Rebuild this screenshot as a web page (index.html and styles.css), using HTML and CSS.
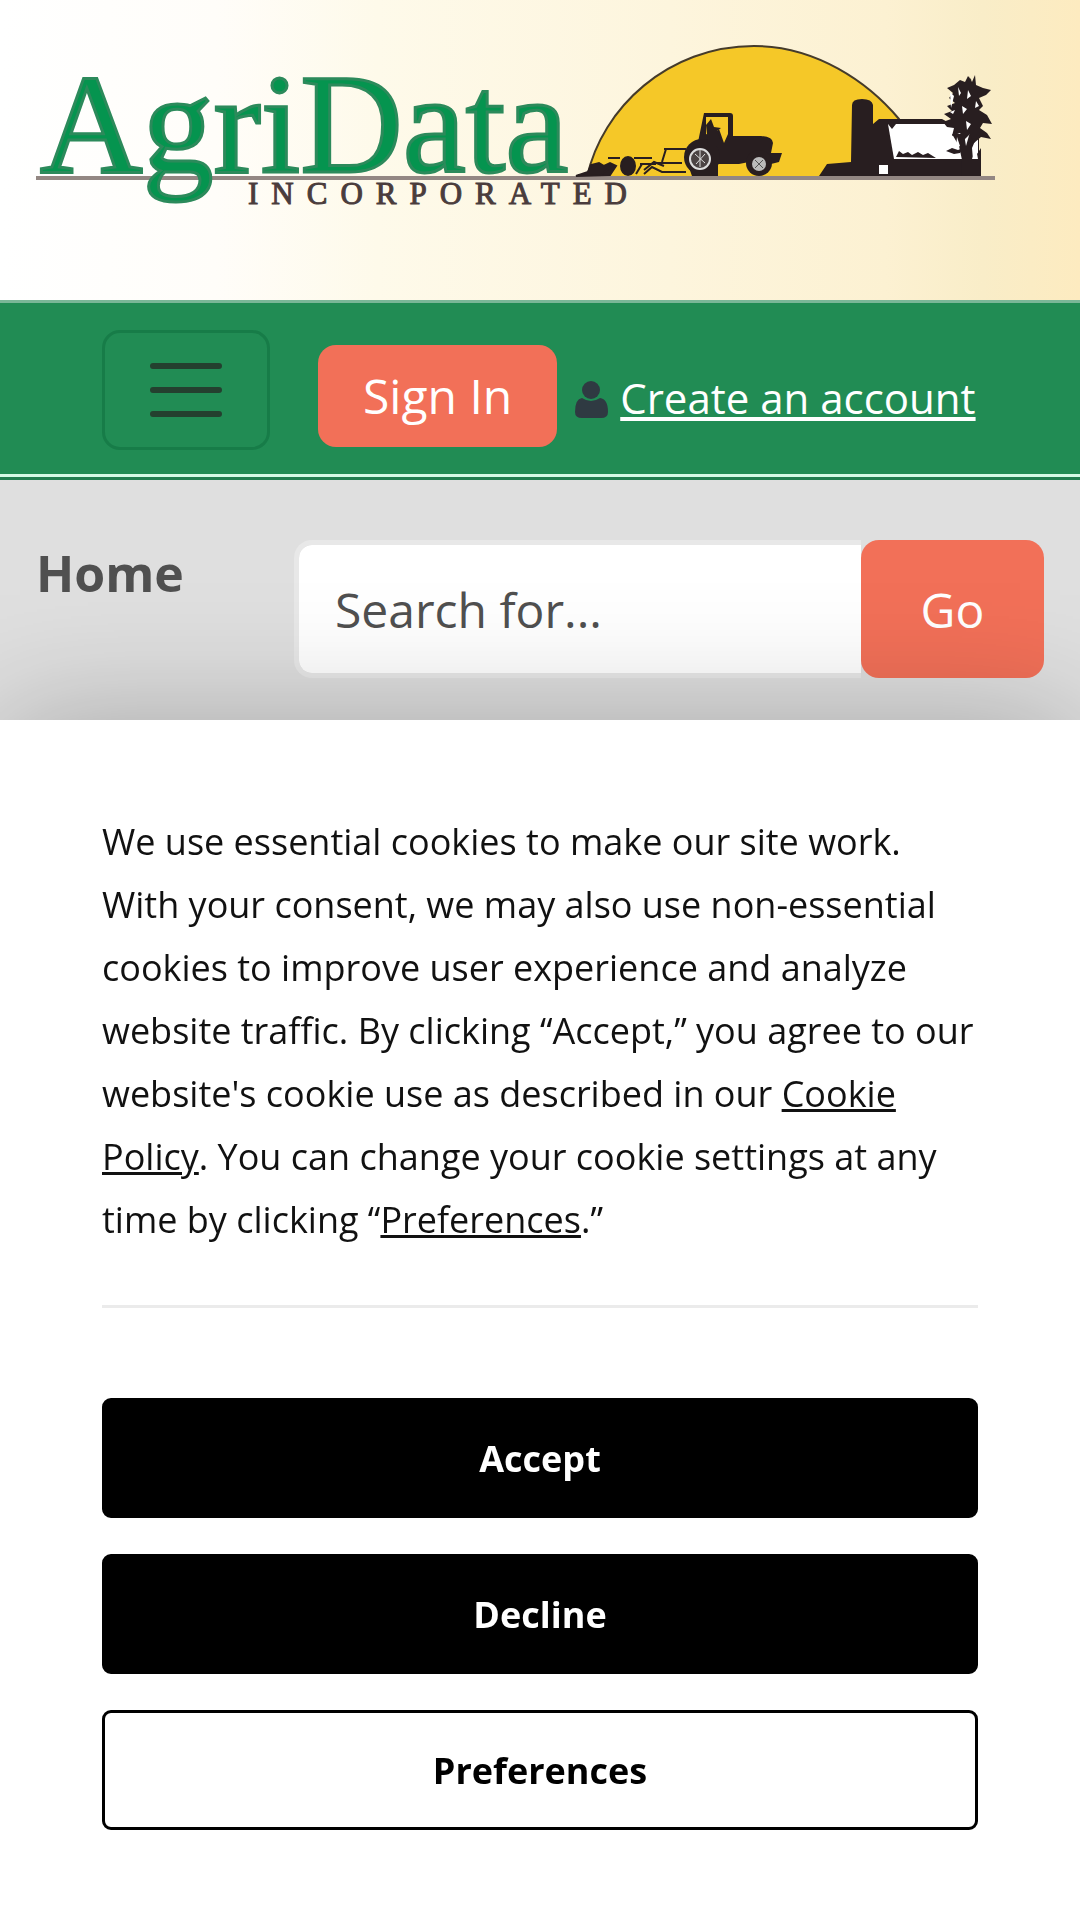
FILE: index.html
```html
<!DOCTYPE html>
<html lang="en">
<head>
    <meta charset="UTF-8">
    <meta name="viewport" content="width=device-width, initial-scale=1.0">
    <title>AgriData Incorporated</title>
    <link rel="stylesheet" href="styles.css">
</head>
<body>
    <header class="banner">
        <a href="#" aria-label="AgriData Incorporated">
            <svg class="logo" viewBox="36 40 960 170">
                <!-- sun -->
                <path d="M587 177C602 108 668 46 754 46C816 46 868 82 899 119L925 177Z" fill="#f5c828" stroke="#453b2b" stroke-width="2"/>
                <!-- ground line -->
                <path d="M36 178H995" stroke="#938783" stroke-width="4"/>
                <!-- plow -->
                <g fill="#281e20" stroke="#281e20" stroke-width="2">
                    <path d="M576 176l12-4 3-7 8-2 5 3 6-3 6 3-6 9z"/>
                    <ellipse cx="628" cy="166" rx="7" ry="9"/>
                    <path d="M608 158h12M634 158h18M640 164h16M644 170l10-8 10 4M644 174l8-7 10 5h24M664 149h22M666 149l-4 13M612 166l-10 8M636 174l6-10M652 163h30" fill="none"/>
                </g>
                <!-- tractor -->
                <g fill="#281e20">
                    <path d="M704 113h26q3 0 3 3v20h28q12 1 12 7l-2 10h11l-3 9-8 2-6-2h-16l-10 2h-22l-16-14-3-8z"/>
                    <circle cx="702" cy="157" r="18"/>
                    <path d="M688 165h30v11h-26z"/>
                    <circle cx="759" cy="163" r="13"/>
                    <path d="M706 117h22v17l-4 9-5-14-7 7-6-2z" fill="#f5c828"/>
                    <path d="M706 125l5-6 3 8 7 1-4 3 5 12h-14z"/>
                    <circle cx="700" cy="159" r="10" fill="#4b4343" stroke="#ddd" stroke-width="2"/>
                    <path d="M695 154l10 9M705 154l-9 10M700 150v17" stroke="#ddd" stroke-width="1"/>
                    <circle cx="759" cy="164" r="7" fill="#bbb"/>
                    <path d="M755 160l8 8M763 160l-8 8" stroke="#555" stroke-width="1"/>
                </g>
                <!-- silo and barn -->
                <g fill="#281e20">
                    <path d="M852 105q0-6 10-6t11 6v19l6-5h63l37 20v37H819l8-12 24-2z"/>
                    <path d="M888 124h58l32 12v23h-84z" fill="#fff"/>
                    <path d="M888 124h8l-4 5zM896 157l3-6 4 3 5-2 4 3 6-3 5 3 5-2 8 5zM946 151l6-3 6 2 5-2-3 5-6 1z"/>
                    <path d="M879 165h9v9h-9z" fill="#fff"/>
                </g>
                <!-- tree -->
                <g fill="#281e20">
                    <path d="M962 160l-3-14-7-12h12l2 12 4-14 8 2-6 14 1 12 8-12v28h-20z"/>
                    <path d="M969 76l3 6 3-7 1 10 7 3 8 2-5 5-7 3 4 8-4 4 8 5 5 9-9-1-3 5 7 5 4 6-10-2-7 6-4-9-6 6-4-7-8 3 2-8-7-1-4-5 8-3-7-5 8-3-5-5 8-3-6-5 4-5-6-5 7-3 6-5 5 2 3-6 4 5z"/>
                    <path d="M950 92l4 4-3 12zM958 87l3 6-2 3zM968 90l3 6-4 3zM962 106l5 3-4 5zM976 101l3 5-4 2zM966 121l5 3-4 6zM950 112l5-2-2 4zM957 137l3 9-4 2zM976 148l2 11-6 0z" fill="#fff"/>
                </g>
                <text class="logo-name" x="40" y="172">AgriData</text>
                <text class="logo-sub" x="248" y="204">INCORPORATED</text>
            </svg>
        </a>
    </header>

    <nav class="navbar">
        <button class="menu-toggle" type="button" aria-label="Toggle navigation">
            <svg viewBox="0 0 90 90" width="90" height="90">
                <path d="M12 21h66M12 45h66M12 69h66" stroke="#24402f" stroke-width="6" stroke-linecap="round"/>
            </svg>
        </button>
        <button class="sign-in" type="button">Sign In</button>
        <svg class="user-icon" viewBox="0 0 33 38" width="33" height="38">
            <circle cx="16" cy="10" r="9"/>
            <path d="M7 18q9 6 18 0q8 1 8 14q0 6-7 6H7q-7 0-7-6Q0 19 7 18z"/>
        </svg>
        <a class="create-account" href="#">Create an account</a>
    </nav>

    <main class="toolbar">
        <h1>Home</h1>
        <form class="search">
            <input type="text" placeholder="Search for..." aria-label="Search for">
            <button type="button">Go</button>
        </form>
    </main>

    <section class="cookie-notice" aria-label="Cookie notice">
        <p>We use essential cookies to make our site work. With your consent, we may also use non-essential cookies to improve user experience and analyze website traffic. By clicking “Accept,” you agree to our website's cookie use as described in our <a href="#">Cookie Policy</a>. You can change your cookie settings at any time by clicking “<a href="#">Preferences</a>.”</p>
        <div class="cookie-buttons">
            <button type="button">Accept</button>
            <button type="button">Decline</button>
            <button class="outline" type="button">Preferences</button>
        </div>
    </section>
</body>
</html>
```
FILE: styles.css
```css
* {
    margin: 0;
    padding: 0;
    box-sizing: border-box;
}

body {
    font-family: "Open Sans", sans-serif;
    font-size: 48px;
    background: #dfdfdf;
    min-height: 100vh;
}

button,
input {
    font-family: inherit;
    font-size: 48px;
}

button {
    cursor: pointer;
}

.banner {
    padding: 40px 36px 90px;
    background: linear-gradient(to right, #fff, #fffdf9 20%, #fefaea 35%, #fdf5dd 62%, #fcf1d2 82%, #f9edc8 91%, #fdebc0);
}

.banner a {
    display: block;
}

.logo {
    display: block;
    width: 100%;
    max-width: 960px;
}

.logo-name {
    font-family: "Liberation Serif", serif;
    font-size: 142px;
    fill: #05944f;
    stroke: #2c8a5b;
    stroke-width: 3px;
}

.logo-sub {
    font-family: "Liberation Serif", serif;
    font-size: 31px;
    letter-spacing: 13px;
    fill: #4a3c3c;
    stroke: #4a3c3c;
    stroke-width: 1px;
}

.navbar {
    display: flex;
    align-items: center;
    padding: 27px 102px;
    background: #218c54;
    border-top: 3px solid #7ab797;
    border-bottom: 3px solid #217e50;
    box-shadow: inset 0 -3px #d5fbe6;
}

.menu-toggle {
    display: flex;
    align-items: center;
    justify-content: center;
    width: 168px;
    height: 120px;
    margin-right: 48px;
    background: none;
    border: 3px solid #177c48;
    border-radius: 18px;
}

.sign-in {
    height: 102px;
    padding: 0 45px;
    margin: 12px 18px 0 0;
    line-height: 1;
    color: #fff;
    background: #f27058;
    border: none;
    border-radius: 18px;
}

.user-icon {
    margin: 18px 12px 0 0;
    fill: #2f3a42;
}

.create-account {
    margin-top: 15px;
    font-size: 42px;
    color: #fff;
    white-space: nowrap;
}

.toolbar {
    display: flex;
    justify-content: space-between;
    padding: 60px 36px;
}

.toolbar h1 {
    font-size: 50px;
    line-height: 66px;
    color: #505050;
}

.search {
    display: flex;
    width: 750px;
}

.search input {
    flex: 1;
    min-width: 0;
    height: 138px;
    padding: 0 36px;
    color: #505050;
    background: #fff;
    background-clip: padding-box;
    border: 5px solid #e8e8e8;
    border-right: none;
    border-radius: 18px 0 0 18px;
}

.search input::placeholder {
    color: #505050;
}

.search button {
    width: 183px;
    color: #fff;
    background: #f27058;
    border: none;
    border-radius: 18px;
}

.cookie-notice {
    position: fixed;
    left: 0;
    right: 0;
    bottom: 0;
    padding: 90px 102px;
    background: #fff;
    box-shadow: 0 0 120px rgba(0, 0, 0, 0.25);
}

.cookie-notice p {
    padding-bottom: 54px;
    margin-bottom: 90px;
    font-size: 36px;
    line-height: 63px;
    color: #111;
    border-bottom: 3px solid #ebebeb;
}

.cookie-notice a {
    color: inherit;
}

.cookie-buttons {
    display: flex;
    flex-direction: column;
    gap: 36px;
}

.cookie-buttons button {
    height: 120px;
    font-size: 36px;
    font-weight: bold;
    color: #fff;
    background: #000;
    border: 3px solid #000;
    border-radius: 9px;
}

.cookie-buttons .outline {
    color: #000;
    background: #fff;
}
```
